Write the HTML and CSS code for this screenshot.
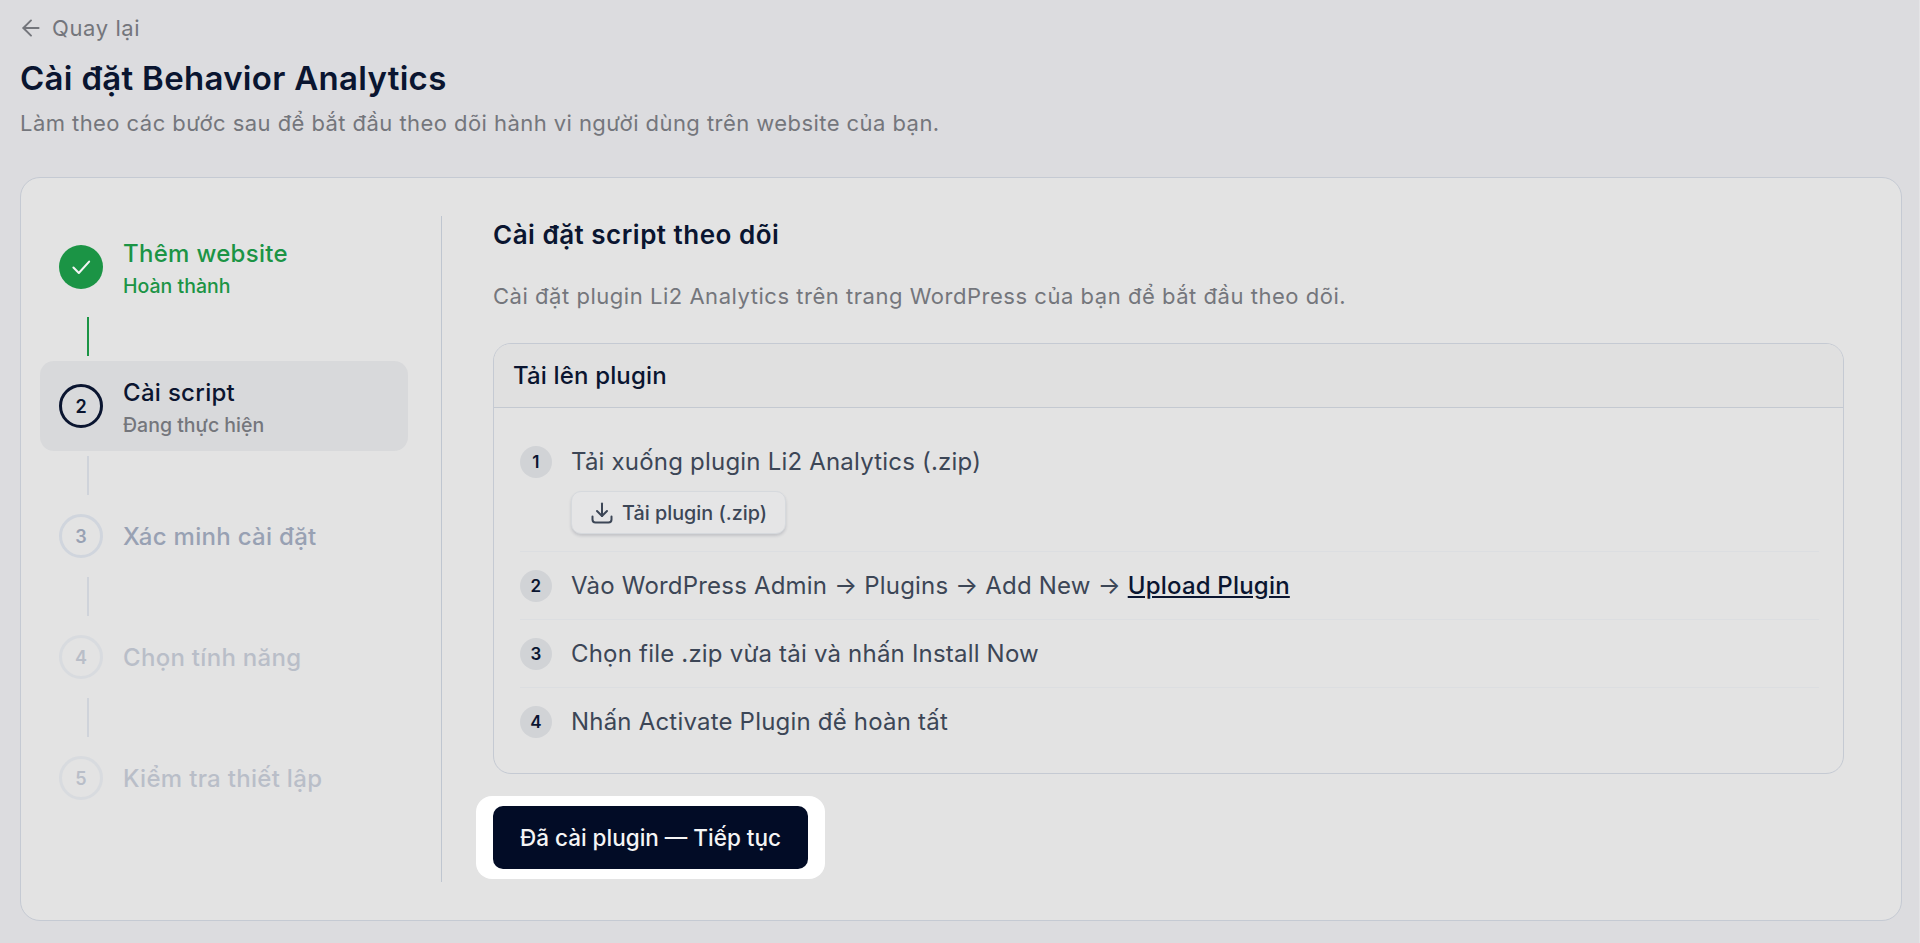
FILE: index.html
```html
<!DOCTYPE html>
<html lang="vi">
<head>
    <meta charset="UTF-8" />
    <meta name="viewport" content="width=device-width, initial-scale=1" />
    <title>Cài đặt Behavior Analytics</title>
    <link rel="stylesheet" href="styles.css">
</head>
<body>
    <div class="page-header">
        <a class="back-link" href="#">
            <svg class="back-icon" viewBox="0 0 24 24"><path d="M19 12H5"/><path d="M12 19l-7-7 7-7"/></svg>
            Quay lại
        </a>
        <h1>Cài đặt Behavior Analytics</h1>
        <p class="page-desc">Làm theo các bước sau để bắt đầu theo dõi hành vi người dùng trên website của bạn.</p>
    </div>

    <div class="setup-card">
        <aside class="stepper">
            <div class="step done">
                <span class="step-circle">
                    <svg class="check-icon" viewBox="0 0 24 24"><path d="M5 12.5l5 5L19.5 7"/></svg>
                </span>
                <div>
                    <div class="step-title">Thêm website</div>
                    <div class="step-status">Hoàn thành</div>
                </div>
            </div>
            <div class="connector done-line"></div>
            <div class="step active">
                <span class="step-circle">2</span>
                <div>
                    <div class="step-title">Cài script</div>
                    <div class="step-status">Đang thực hiện</div>
                </div>
            </div>
            <div class="connector"></div>
            <div class="step pending">
                <span class="step-circle">3</span>
                <div class="step-title">Xác minh cài đặt</div>
            </div>
            <div class="connector"></div>
            <div class="step pending faded">
                <span class="step-circle">4</span>
                <div class="step-title">Chọn tính năng</div>
            </div>
            <div class="connector"></div>
            <div class="step pending faded">
                <span class="step-circle">5</span>
                <div class="step-title">Kiểm tra thiết lập</div>
            </div>
        </aside>

        <main class="content">
            <h2>Cài đặt script theo dõi</h2>
            <p class="content-desc">Cài đặt plugin Li2 Analytics trên trang WordPress của bạn để bắt đầu theo dõi.</p>

            <section class="plugin-box">
                <div class="plugin-head">Tải lên plugin</div>
                <ol class="plugin-steps">
                    <li>
                        <span class="num">1</span>
                        <div>
                            <div>Tải xuống plugin Li2 Analytics (.zip)</div>
                            <button class="download-btn" type="button">
                                <svg class="download-icon" viewBox="0 0 24 24"><path d="M12 2.500V15"/><path d="M7 10l5 5 5-5"/><path d="M2.500 15.500v3a3 3 0 0 0 3 3h13a3 3 0 0 0 3-3v-3"/></svg>
                                Tải plugin (.zip)
                            </button>
                        </div>
                    </li>
                    <li>
                        <span class="num">2</span>
                        <div>Vào WordPress Admin → Plugins → Add New → <a class="upload-link" href="#">Upload Plugin</a></div>
                    </li>
                    <li>
                        <span class="num">3</span>
                        <div>Chọn file .zip vừa tải và nhấn Install Now</div>
                    </li>
                    <li>
                        <span class="num">4</span>
                        <div>Nhấn Activate Plugin để hoàn tất</div>
                    </li>
                </ol>
            </section>

            <div class="spotlight">
                <button class="next-btn" type="button">Đã cài plugin — Tiếp tục</button>
            </div>
        </main>
    </div>
</body>
</html>
```

FILE: styles.css
```css
* {
    box-sizing: border-box;
}
body {
    font-family: Inter, 'Noto Sans', sans-serif;
    background-color: #dcdcdf;
    color: #0b1530;
    margin: 0;
    padding: 0 17px 22px 20px;
    height: 943px;
    overflow: hidden;
    border-right: 1px solid #e4e4e6;
}
.page-header {
    height: 177px;
    padding-top: 14px;
}
.back-link {
    display: flex;
    align-items: center;
    gap: 8px;
    height: 28px;
    font-size: 22px;
    letter-spacing: 0.6px;
    color: #74767c;
    text-decoration: none;
}
.back-icon {
    width: 26px;
    height: 26px;
    margin-left: -2px;
    fill: none;
    stroke: #74767c;
    stroke-width: 1.8;
    stroke-linecap: round;
    stroke-linejoin: round;
}
h1 {
    margin: 16px 0 0;
    font-size: 33px;
    line-height: 40px;
    font-weight: 600;
    letter-spacing: 0.3px;
    color: #0a1530;
}
.page-desc {
    margin: 10px 0 0;
    font-size: 22px;
    line-height: 30px;
    letter-spacing: 0.44px;
    color: #74767c;
}
.setup-card {
    display: flex;
    height: 744px;
    padding: 38px 57px 38px 19px;
    background-color: #e3e3e3;
    border: 1px solid #c5cad3;
    border-radius: 20px;
}
.stepper {
    width: 402px;
    flex-shrink: 0;
    padding: 6px 33px 0 0;
    border-right: 1px solid #bfc6d0;
}
.step {
    display: flex;
    align-items: center;
    gap: 20px;
    min-height: 72px;
    padding: 14px 19px;
    border-radius: 14px;
}
.done,
.active {
    min-height: 90px;
}
.active {
    background-color: #d8d9db;
}
.step-circle {
    display: flex;
    align-items: center;
    justify-content: center;
    width: 44px;
    height: 44px;
    flex-shrink: 0;
    border-radius: 50%;
    font-size: 18px;
    font-weight: 600;
}
.step-title {
    font-size: 24px;
    line-height: 34px;
    font-weight: 500;
    letter-spacing: 0.3px;
}
.pending .step-title {
    padding-top: 2px;
    line-height: 32px;
    color: #98a1b3;
}
.step-status {
    margin-top: 3px;
    font-size: 19.5px;
    line-height: 24px;
    font-weight: 500;
}
.done .step-circle {
    background-color: #1b9445;
}
.done .step-title,
.done .step-status {
    color: #1b9445;
}
.check-icon {
    width: 26px;
    height: 26px;
    fill: none;
    stroke: #f4f4f4;
    stroke-width: 1.9;
    stroke-linecap: round;
    stroke-linejoin: round;
}
.active .step-circle {
    border: 3px solid #0a1530;
    color: #0a1530;
}
.active .step-status {
    color: #74767c;
}
.pending .step-circle {
    border: 3px solid #d0d5dd;
    color: #98a1b3;
}
.faded {
    opacity: 0.55;
}
.connector {
    width: 2px;
    height: 39px;
    margin: 5px 0 5px 47px;
    background-color: #cfd3da;
}
.done-line {
    background-color: #1b9445;
}
.content {
    flex: 1;
    min-width: 0;
    padding-left: 51px;
}
h2 {
    margin: 0;
    font-size: 26px;
    line-height: 38px;
    font-weight: 600;
    letter-spacing: 0.5px;
    color: #0a1530;
}
.content-desc {
    margin: 26px 0 0;
    font-size: 22px;
    line-height: 32px;
    letter-spacing: 0.53px;
    color: #74767c;
}
.plugin-box {
    margin-top: 31px;
    background-color: #e3e3e3;
    border: 1px solid #c5cad3;
    border-radius: 18px;
    overflow: hidden;
}
.plugin-head {
    height: 64px;
    padding: 0 19px;
    line-height: 63px;
    font-size: 24px;
    font-weight: 500;
    letter-spacing: 0.15px;
    color: #0a1530;
    background-color: #e0e0e0;
    border-bottom: 1px solid #c4c9d1;
}
.plugin-steps {
    list-style: none;
    margin: 0;
    padding: 20px 24px 18px 26px;
    font-size: 24px;
    line-height: 32px;
    letter-spacing: 0.2px;
    color: #3c4656;
}
.plugin-steps li {
    display: flex;
    gap: 19px;
    padding: 18px 0 17px;
    border-bottom: 1px solid #dcdee1;
}
.plugin-steps li:last-child {
    border-bottom: none;
}
.num {
    display: flex;
    align-items: center;
    justify-content: center;
    width: 32px;
    height: 32px;
    flex-shrink: 0;
    border-radius: 50%;
    background-color: #d1d3d6;
    font-size: 17px;
    font-weight: 600;
    color: #0a1530;
}
.download-btn {
    display: flex;
    align-items: center;
    gap: 8px;
    height: 43px;
    margin-top: 13px;
    padding: 0 18px 0 18px;
    font-family: inherit;
    font-size: 19.8px;
    font-weight: 500;
    color: #3c4656;
    background-color: #e5e5e6;
    border: 1px solid #d6d9dd;
    border-radius: 10px;
    box-shadow: 0 2px 3px rgba(30, 40, 60, 0.16);
}
.download-icon {
    width: 24px;
    height: 24px;
    fill: none;
    stroke: #3c4656;
    stroke-width: 2;
    stroke-linecap: round;
    stroke-linejoin: round;
}
.upload-link {
    font-weight: 500;
    color: #0a1530;
    text-decoration: underline;
}
.spotlight {
    display: inline-flex;
    margin: 22px 0 0 -17px;
    padding: 10px 17px;
    background-color: #ffffff;
    border-radius: 16px;
}
.next-btn {
    width: 315px;
    height: 63px;
    padding: 0;
    font-family: inherit;
    font-size: 22.500px;
    font-weight: 500;
    color: #f5f5f5;
    background-color: #020c26;
    border: none;
    border-radius: 10px;
}
```
